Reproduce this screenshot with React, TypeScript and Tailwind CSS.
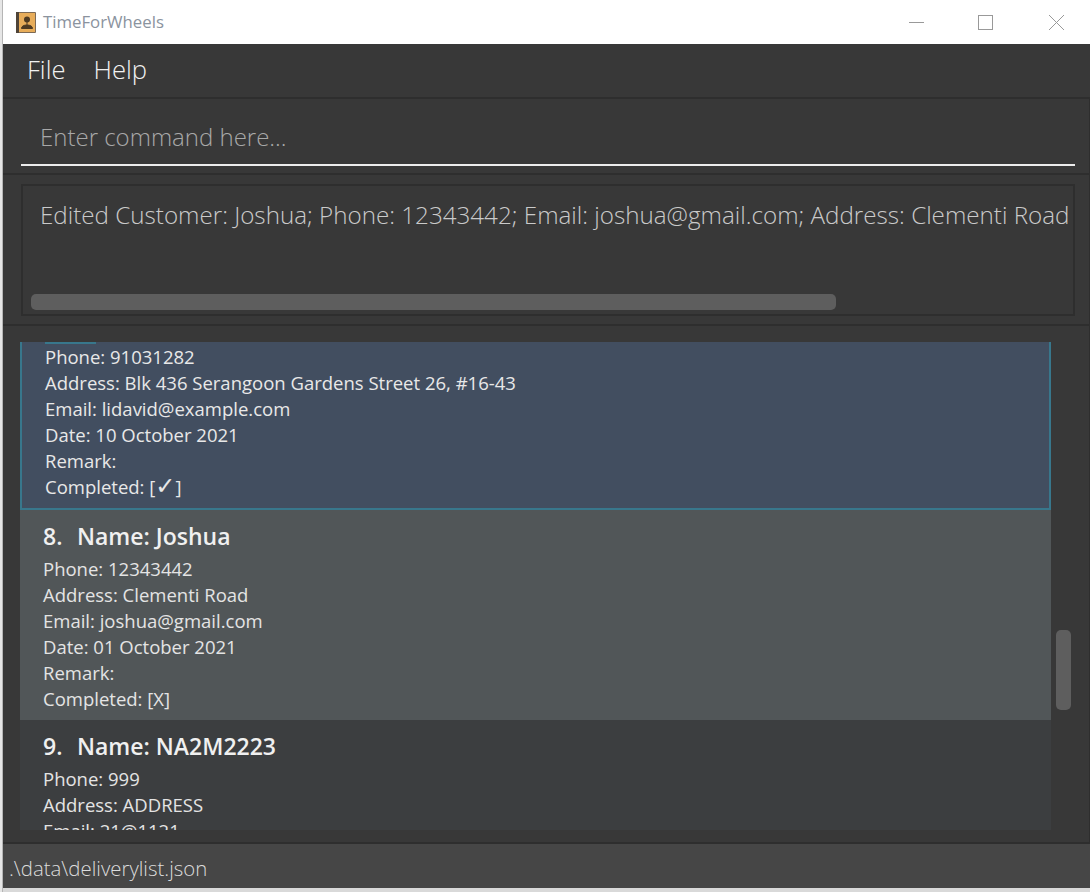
const Row = ({ children }: { children: React.ReactNode }) => (
  <div className="h-[26px] leading-[26px] whitespace-nowrap">{children}</div>
);

const AppIcon = () => (
  <svg width="20" height="21" viewBox="0 0 20 21">
    <rect x="0" y="0" width="20" height="21" rx="1" fill="#7d6a55" />
    <rect x="0" y="0" width="3" height="21" fill="#4f4438" />
    <rect x="3" y="1" width="16" height="19" fill="#e8ad5a" />
    <circle cx="11" cy="7.5" r="3" fill="#4e3a22" />
    <path d="M11 10V13M5.5 16.5C5.5 14 8 13 11 13C14 13 16.5 14 16.5 16.5Z" stroke="#4e3a22" fill="#4e3a22" />
  </svg>
);

const Person = ({
  index,
  name,
  lines,
  bg,
}: {
  index: string;
  name: string;
  lines: string[];
  bg: string;
}) => (
  <div className={bg + " pl-[23px] pt-[10px] h-[210px] overflow-hidden"}>
    <div className="flex h-[32px] items-center text-[23px] font-semibold text-[#f0f0f0]">
      <span className="w-[34px]">{index}</span>
      <span>{name}</span>
    </div>
    <div className="text-[18.5px] text-[#e4e4e4] mt-[4px]">
      {lines.map((line) => (
        <Row key={line}>{line}</Row>
      ))}
    </div>
  </div>
);

export default function App() {
  return (
    <div className="w-[1090px] h-[892px] overflow-hidden flex bg-[#d9d9d9] font-['Open_Sans','Noto_Sans',sans-serif]">
      <div className="w-[3px] bg-[#e6e6e6] border-r border-[#b5b5b5]" />
      <div className="flex-1 flex flex-col">
        {/* title bar */}
        <div className="h-[44px] bg-white flex items-center pl-[13px]">
          <AppIcon />
          <span className="ml-[7px] text-[16.8px] text-[#8b939e]">TimeForWheels</span>
          <div className="ml-auto flex items-center mr-[26px]">
            <svg width="15" height="15" viewBox="0 0 15 15" className="mr-[54px]">
              <path d="M0 7.5H15" stroke="#999999" fill="none" />
            </svg>
            <svg width="15" height="15" viewBox="0 0 15 15" className="mr-[56px]">
              <rect x="0.5" y="0.5" width="14" height="14" stroke="#999999" fill="none" />
            </svg>
            <svg width="15" height="15" viewBox="0 0 15 15">
              <path d="M0 0L15 15M15 0L0 15" stroke="#999999" fill="none" />
            </svg>
          </div>
        </div>

        {/* menu bar */}
        <div className="h-[55px] bg-[#383838] flex items-center pl-[24px] gap-[28px] text-[25.6px] font-light text-[#f2f2f2] border-b-2 border-[#2e2e2e]">
          <span>File</span>
          <span>Help</span>
        </div>

        {/* command box */}
        <div className="h-[76px] bg-[#383838] pl-[18px] pr-[14px] border-b-2 border-r border-[#2e2e2e] pt-[20px]">
          <div className="h-[47px] border-b-2 border-[#ececec] pl-[19px] text-[24px] font-light text-[#a8a8a8] leading-[36px]">
            Enter command here...
          </div>
        </div>

        {/* result box */}
        <div className="h-[151px] bg-[#383838] border-b-2 border-r border-[#2e2e2e] pl-[18px] pr-[14px] pt-[9px]">
          <div className="h-[132px] border-2 border-[#2e2e2e] flex flex-col pl-[8px] overflow-hidden">
            <div className="pl-[9px] pt-[11px] h-[108px] text-[24.2px] font-light text-[#cacaca] leading-[36px] whitespace-nowrap">
              Edited Customer: Joshua; Phone: 12343442; Email: joshua@gmail.com; Address: Clementi Road
            </div>
            <div className="w-[805px] h-[16px] rounded-[5px] bg-[#5e5e5e]" />
          </div>
        </div>

        {/* list */}
        <div className="flex-1 bg-[#383838] border-b-2 border-r border-[#2e2e2e] flex pl-[17px] pt-[16px]">
          <div className="w-[1031px] h-[488px] overflow-hidden bg-[#3c3e40]">
            <div className="h-[168px] bg-[#424e60] border-x-2 border-b-2 border-[#38778c] pl-[23px] text-[18.5px] text-[#e8e8e8]">
              <div className="h-[2px] w-[51px] bg-[#38778c]" />
              <div>
                <Row>Phone: 91031282</Row>
                <Row>Address: Blk 436 Serangoon Gardens Street 26, #16-43</Row>
                <Row>Email: lidavid@example.com</Row>
                <Row>Date: 10 October 2021</Row>
                <Row>Remark:</Row>
                <Row>
                  Completed: [<span className="font-['DejaVu_Sans'] text-[24px] leading-none font-bold">✓</span>]
                </Row>
              </div>
            </div>
            <Person
              index="8."
              name="Name: Joshua"
              bg="bg-[#515658]"
              lines={[
                "Phone: 12343442",
                "Address: Clementi Road",
                "Email: joshua@gmail.com",
                "Date: 01 October 2021",
                "Remark:",
                "Completed: [X]",
              ]}
            />
            <Person
              index="9."
              name="Name: NA2M2223"
              bg="bg-[#3c3e40]"
              lines={["Phone: 999", "Address: ADDRESS", "Email: 21@1121"]}
            />
          </div>
          <div className="ml-[5px] mt-[288px] w-[15px] h-[80px] rounded-[5px] bg-[#5e5e5e]" />
        </div>

        {/* status bar */}
        <div className="h-[44px] bg-[#464646] pl-[6px] text-[20.4px] font-light text-[#dcdcdc] leading-[48px]">
          .\data\deliverylist.json
        </div>
        <div className="h-[4px] bg-[#d9d9d9]" />
      </div>
    </div>
  );
}
